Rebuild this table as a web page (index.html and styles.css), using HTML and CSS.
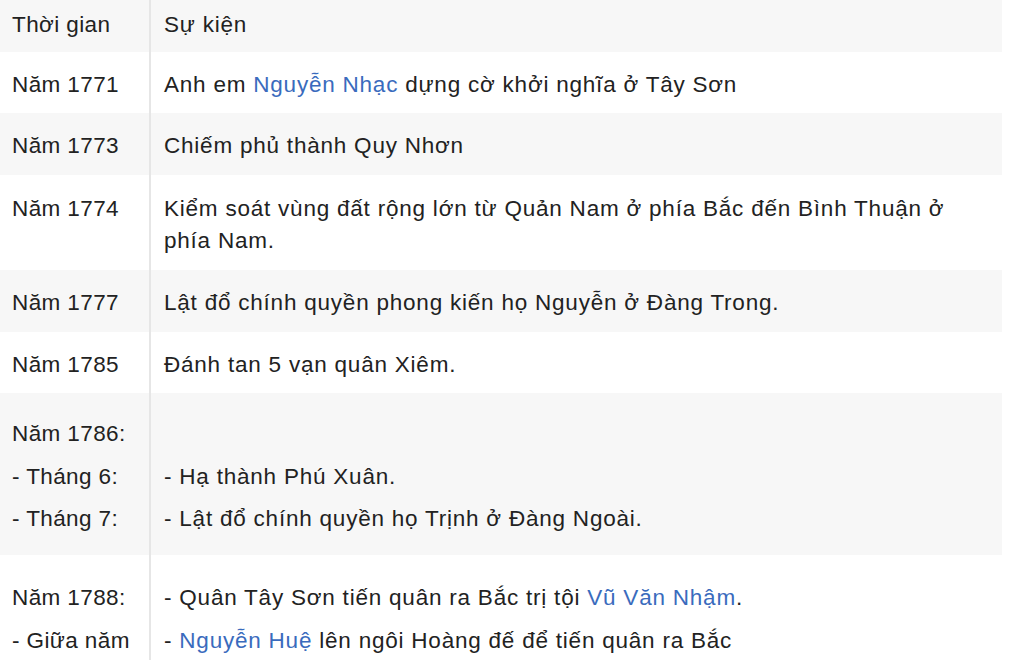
FILE: index.html
```html
<!DOCTYPE html>
<html lang="vi">
<head>
    <meta charset="UTF-8">
    <title>Khởi nghĩa Tây Sơn</title>
    <link rel="stylesheet" href="styles.css">
</head>
<body>
    <table class="timeline">
        <tr class="head">
            <td class="year">Thời gian</td>
            <td class="event">Sự kiện</td>
        </tr>
        <tr>
            <td class="year">Năm 1771</td>
            <td class="event">Anh em <a href="#">Nguyễn Nhạc</a> dựng cờ khởi nghĩa ở Tây Sơn</td>
        </tr>
        <tr class="alt">
            <td class="year">Năm 1773</td>
            <td class="event">Chiếm phủ thành Quy Nhơn</td>
        </tr>
        <tr class="two">
            <td class="year">Năm 1774</td>
            <td class="event">Kiểm soát vùng đất rộng lớn từ Quản Nam ở phía Bắc đến Bình Thuận ở phía Nam.</td>
        </tr>
        <tr class="alt">
            <td class="year">Năm 1777</td>
            <td class="event">Lật đổ chính quyền phong kiến họ Nguyễn ở Đàng Trong.</td>
        </tr>
        <tr>
            <td class="year">Năm 1785</td>
            <td class="event">Đánh tan 5 vạn quân Xiêm.</td>
        </tr>
        <tr class="alt multi">
            <td class="year">Năm 1786:<br>- Tháng 6:<br>- Tháng 7:</td>
            <td class="event"><br>- Hạ thành Phú Xuân.<br>- Lật đổ chính quyền họ Trịnh ở Đàng Ngoài.</td>
        </tr>
        <tr class="multi last">
            <td class="year">Năm 1788:<br>- Giữa năm</td>
            <td class="event">- Quân Tây Sơn tiến quân ra Bắc trị tội <a href="#">Vũ Văn Nhậm</a>.<br>- <a href="#">Nguyễn Huệ</a> lên ngôi Hoàng đế để tiến quân ra Bắc</td>
        </tr>
    </table>
</body>
</html>
```

FILE: styles.css
```css
body {
    margin: 0;
    background-color: white;
    font-family: "Liberation Sans", Arial, sans-serif;
    font-size: 22.5px;
    color: #222;
}
.timeline {
    width: 1002px;
    border-collapse: collapse;
}
.timeline td {
    padding: 17px 12px 12px;
    line-height: 32px;
    vertical-align: top;
}
.timeline .year {
    width: 125px;
    border-right: 2px solid #e6e6e6;
    letter-spacing: 0.4px;
}
.timeline .event {
    padding-left: 13px;
    letter-spacing: 0.78px;
}
.head td {
    padding-top: 9px;
    padding-bottom: 11px;
}
.head, .alt {
    background-color: #f7f7f7;
}
.alt td {
    padding-bottom: 13px;
}
.two td {
    padding-top: 18px;
    padding-bottom: 13px;
}
.multi td {
    line-height: 42.5px;
    padding-top: 20px;
    padding-bottom: 14px;
}
.last td {
    padding-top: 21px;
    line-height: 43px;
}
a {
    color: #3a6bbd;
    text-decoration: none;
}
```
